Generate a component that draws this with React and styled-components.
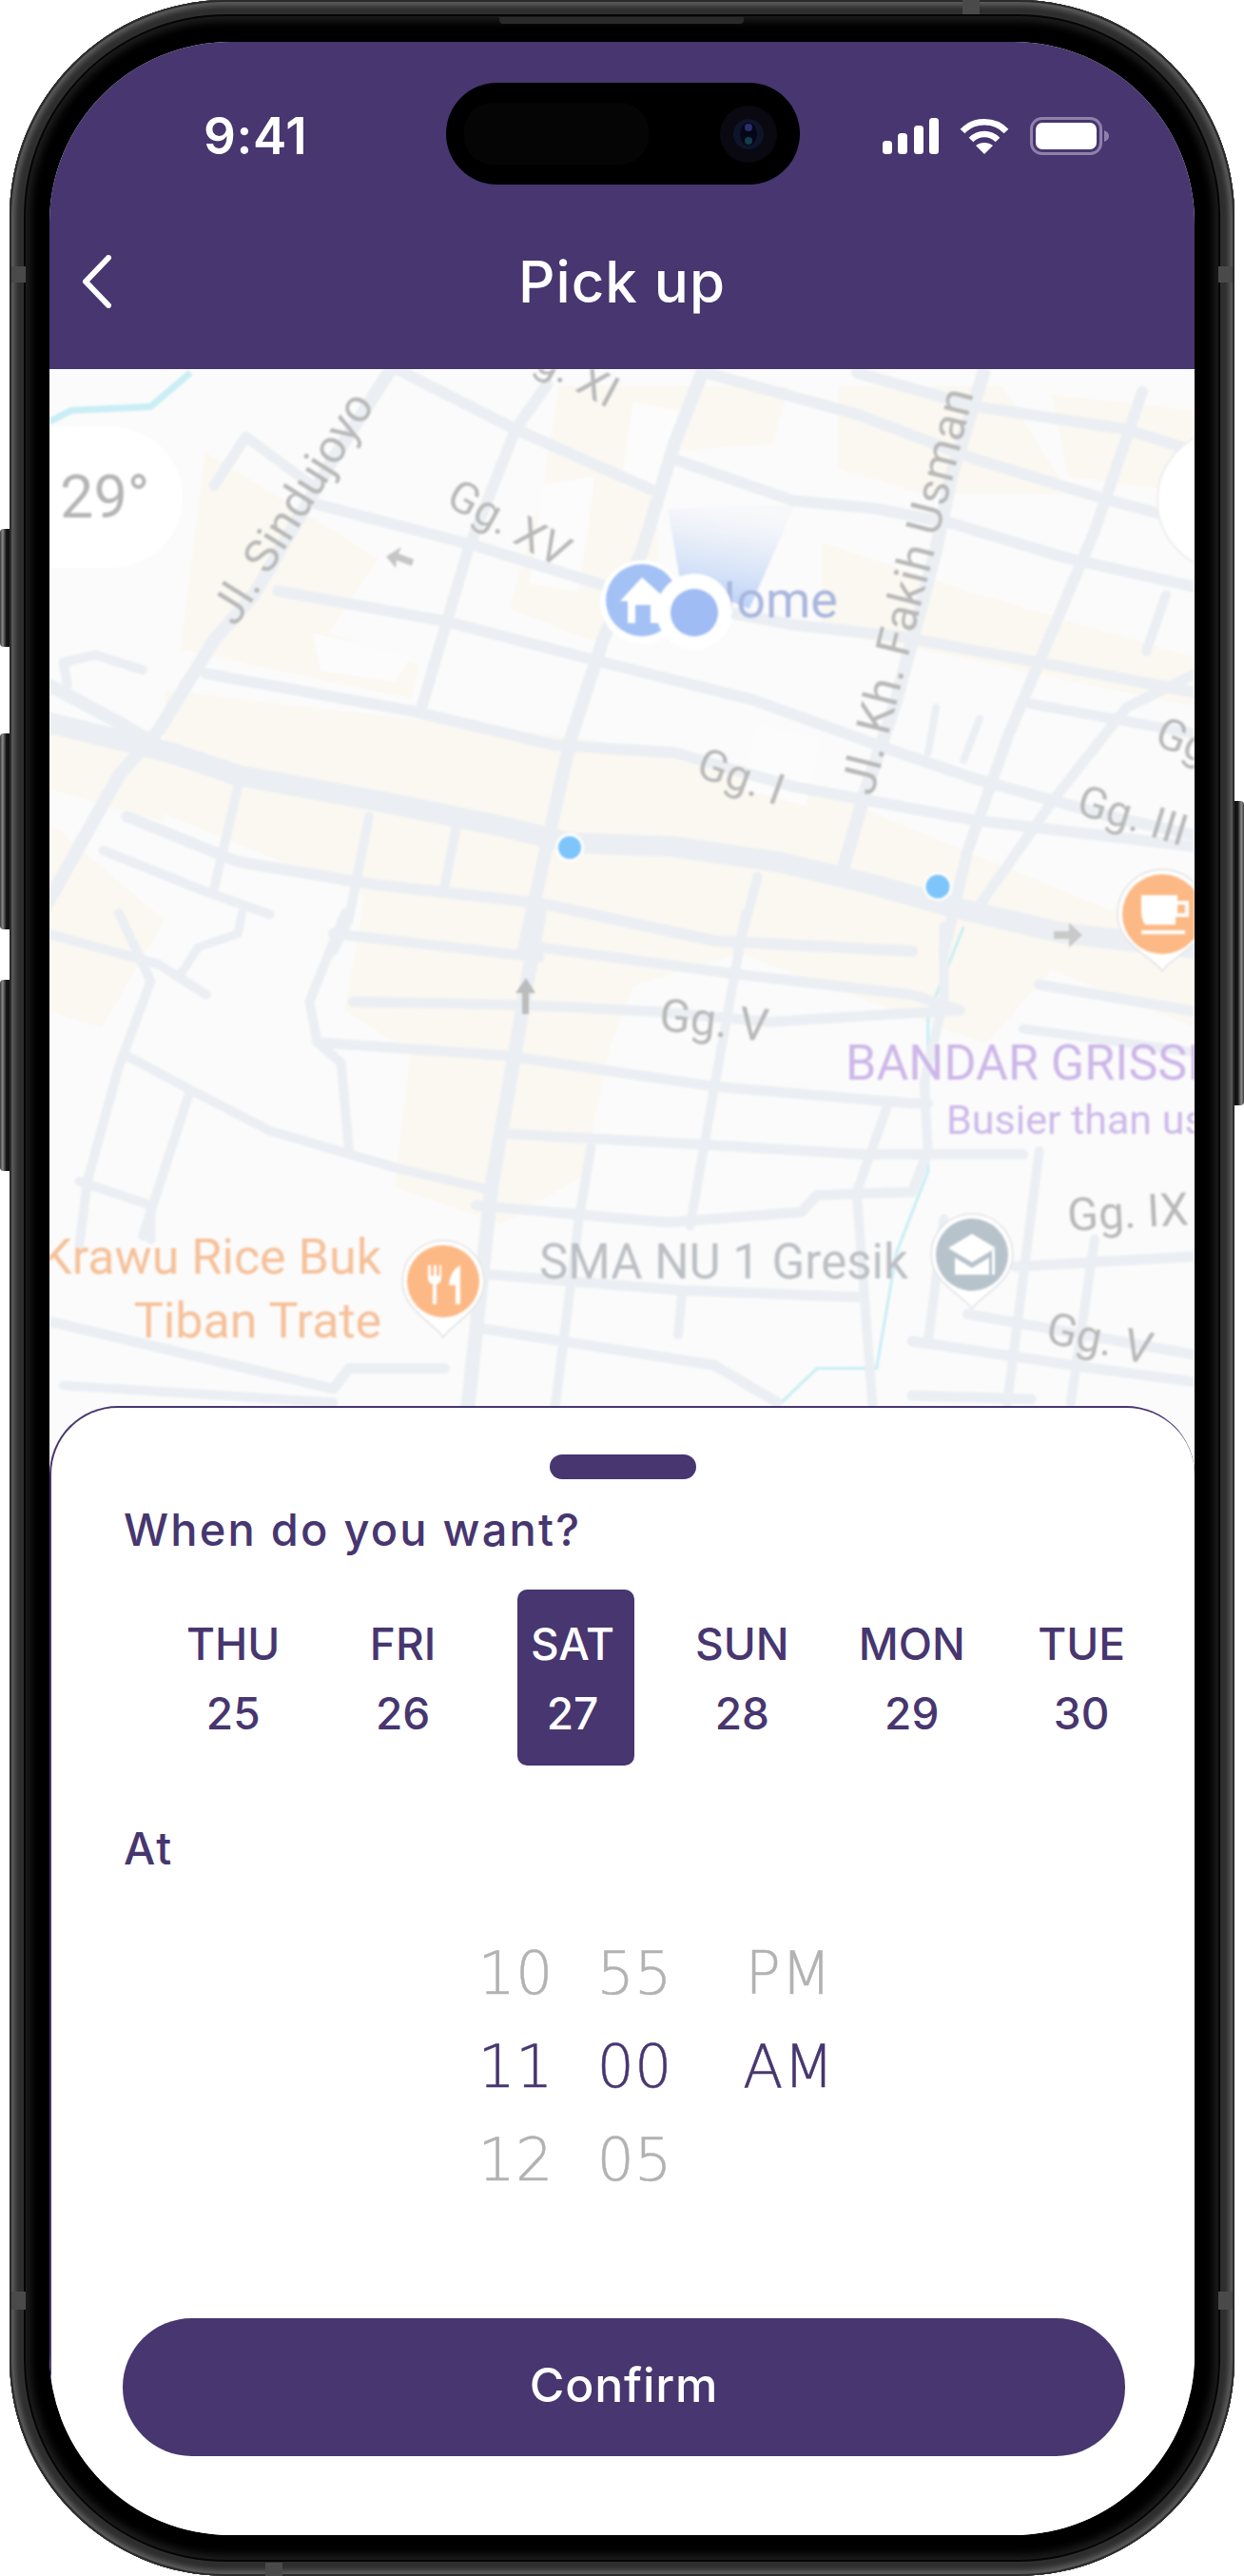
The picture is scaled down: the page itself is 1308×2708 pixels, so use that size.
import React from "react";
import styled, { createGlobalStyle } from "styled-components";

const PURPLE = "#47366f";
const UI = `"Inter", "Liberation Sans", sans-serif`;
const MAPFONT = `"Roboto", "Liberation Sans", sans-serif`;

const Global = createGlobalStyle`
  html, body { margin: 0; padding: 0; background: #fff; }
  * { box-sizing: border-box; }
`;

const Page = styled.div`
  width: 1308px;
  height: 2708px;
  padding: 0 10px;
  background: #fff;
  position: relative;
  overflow: hidden;
`;
const SideButton = styled.div`
  position: absolute;
  ${(p) => (p.$right ? "right: 0;" : "left: 0;")}
  top: ${(p) => p.$top}px;
  height: ${(p) => p.$h}px;
  width: 11px;
  border-radius: ${(p) => (p.$right ? "0 4px 4px 0" : "4px 0 0 4px")};
  background: linear-gradient(${(p) => (p.$right ? "270deg" : "90deg")}, #3a3a3a 0, #8a8a8a 25%, #161616 60%, #0c0c0c 100%);
`;
const Phone = styled.div`
  position: relative;
  width: 1288px;
  height: 2708px;
  padding: 44px 42px 43px;
  border-radius: 228px;
  background: #000;
  box-shadow:
    inset 0 0 0 2px #2b2b2b,
    inset 0 0 5px 6px #5c5c5c,
    inset 0 0 0 15px #2e2e2e,
    inset 0 0 0 17px #050505,
    inset 0 0 8px 22px #1e1e1e;
`;
const Antenna = styled.div`
  position: absolute;
  background: #4a4a4a;
  width: ${(p) => p.$w}px;
  height: ${(p) => p.$h}px;
  left: ${(p) => p.$l}px;
  top: ${(p) => p.$t}px;
`;
const Speaker = styled.div`
  position: absolute;
  left: 515px;
  top: 18px;
  width: 257px;
  height: 7px;
  background: #2a2a2a;
  border-radius: 0 0 4px 4px;
`;
const Screen = styled.div`
  position: relative;
  width: 1204px;
  height: 2621px;
  border-radius: 190px;
  overflow: hidden;
  background: #fff;
  display: flex;
  flex-direction: column;
`;
const Island = styled.div`
  position: absolute;
  left: 417px;
  top: 43px;
  width: 372px;
  height: 107px;
  border-radius: 54px;
  background: #000;
  display: flex;
  align-items: center;
  justify-content: space-between;
  padding: 0 24px 0 19px;
`;
const IslandSensor = styled.div`
  width: 194px;
  height: 65px;
  border-radius: 30px;
  background: #050505;
`;
const Header = styled.header`
  flex: none;
  height: 344px;
  background: ${PURPLE};
  padding-top: 79px;
  color: #fff;
  font-family: ${UI};
`;
const StatusRow = styled.div`
  display: flex;
  align-items: center;
  justify-content: space-between;
  height: 40px;
  padding: 0 90px 0 162px;
`;
const Clock = styled.div`
  font-size: 53px;
  line-height: 40px;
  font-weight: 600;
  letter-spacing: 0.6px;
`;
const StatusIcons = styled.div`
  display: flex;
  align-items: center;
  gap: 22px;
`;
const NavRow = styled.div`
  display: grid;
  grid-template-columns: 1fr auto 1fr;
  align-items: center;
  height: 60px;
  margin-top: 103px;
  padding-left: 34px;
`;
const Title = styled.div`
  font-size: 60px;
  line-height: 60px;
  font-weight: 500;
  margin-left: -34px;
  letter-spacing: 1px;
`;
const MapArea = styled.div`
  flex: none;
  height: 1162px;
  overflow: hidden;
  background: #fbfbfb;
`;
const MapSvg = styled.svg`
  display: block;
  width: 1204px;
  height: 1162px;
  filter: blur(1.1px);
`;
const Sheet = styled.section`
  flex: 1;
  position: relative;
  margin-top: -72px;
  background: #fff;
  border: solid ${PURPLE};
  border-width: 2px 0 0 2px;
  border-radius: 72px 72px 0 0;
  padding: 0 73px 0 75px;
  font-family: ${UI};
  color: ${PURPLE};
`;
const Handle = styled.div`
  width: 154px;
  height: 26px;
  margin: 49px 0 0 449px;
  border-radius: 13px;
  background: ${PURPLE};
`;
const Label = styled.h2`
  margin: ${(p) => p.$top}px 0 0 1px;
  font-size: 47px;
  line-height: 60px;
  font-weight: 500;
  letter-spacing: ${(p) => p.$ls || 0}px;
`;
const Days = styled.div`
  display: grid;
  grid-template-columns: repeat(6, 178.4px);
  margin: 33px 0 0 27px;
`;
const Day = styled.div`
  justify-self: center;
  width: 123px;
  height: 185px;
  margin-left: ${(p) => (p.$active ? 7 : 0)}px;
  padding: 21px ${(p) => (p.$active ? 7 : 0)}px 0 0;
  border-radius: 10px;
  background: ${(p) => (p.$active ? PURPLE : "transparent")};
  color: ${(p) => (p.$active ? "#fff" : PURPLE)};
  text-align: center;
  font-size: 46px;
  line-height: 73px;
  font-weight: 500;
  white-space: nowrap;
  display: flex;
  flex-direction: column;
  align-items: center;
`;
const Picker = styled.div`
  display: flex;
  margin: 53px 0 0 363px;
  font-family: "DejaVu Sans Light", "DejaVu Sans", sans-serif;
  font-weight: 200;
  font-size: 62px;
  line-height: 98px;
  -webkit-text-stroke: 0.5px currentColor;
`;
const Wheel = styled.div`
  width: ${(p) => p.$w}px;
  margin-right: ${(p) => p.$gap || 0}px;
  height: 294px;
  text-align: center;
`;
const WheelItem = styled.div`
  height: 98px;
  color: ${(p) => (p.$active ? PURPLE : "#b2b2b2")};
`;
const Confirm = styled.button`
  display: block;
  width: 1054px;
  height: 145px;
  margin-top: 117px;
  padding-bottom: 6px;
  border: 0;
  border-radius: 73px;
  background: ${PURPLE};
  color: #fff;
  font-family: ${UI};
  font-size: 50px;
  font-weight: 500;
  letter-spacing: 0.8px;
`;

const z2 = (s) => s.trim().split(/\s+/).map((p) => { const [x, y] = p.split(",").map(Number); return [x / 1.199, y / 2.529 + 380]; });
const z3 = (s) => s.trim().split(/\s+/).map((p) => { const [x, y] = p.split(",").map(Number); return [x / 1.199, y / 2.8 + 960]; });
const sh = (s) => s.trim().split(/\s+/).map((p) => { const [x, y] = p.split(",").map(Number); return [x * 1.728, y * 1.728]; });
const dPath = (pts) => pts.map((p, i) => `${i ? "L" : "M"}${p[0].toFixed(1)} ${p[1].toFixed(1)}`).join(" ");

const beige = [
  sh("100,420 360,450 520,490 727,575 727,625 640,590 600,635 450,580 385,600 370,640 355,715 305,745 240,722 250,640 210,615 222,545 100,495"),
  sh("30,500 100,560 62,625 30,615"),
  sh("30,440 100,460 100,500 30,480"),
  sh("125,275 230,340 200,385 255,405 250,425 110,395"),
  sh("340,235 480,235 470,270 400,275 400,350 360,390 310,370 330,300"),
  sh("510,235 610,235 650,300 560,300 510,285"),
  sh("640,240 727,250 727,300 650,290"),
  sh("500,330 590,360 727,400 727,430 560,395 500,385"),
];
const whiteBlocks = [
  sh("190,385 250,400 240,415 195,408"),
  sh("330,295 362,290 352,360 322,355"),
  sh("385,245 415,250 405,300 378,295"),
  sh("460,440 500,450 490,490 452,480"),
];

const roads = [
  [14, z2("885,30 850,220 810,500 760,740 720,1000 690,1280 660,1568")],
  [22, z2("62,960 215,1040 300,1100 480,1170 620,1230 720,1280 850,1290 980,1330 1100,1390 1200,1450 1340,1520 1507,1560")],
  [14, z2("490,30 420,260 320,620 270,740 200,980 150,1100 60,1440")],
  [14, z2("62,860 150,960 215,1040")],
  [14, z2("1240,30 1200,300 1180,500 1130,900 1090,1150 1060,1370")],
  [12, z2("1440,80 1380,450 1320,750 1270,1000 1220,1300 1190,1568")],
  [12, z2("690,60 650,180 590,500 530,930")],
  [12, z2("500,20 650,180 820,340")],
  [12, z2("350,610 560,690 760,800 950,900 1120,1030 1230,1110 1400,1210 1507,1260")],
  [12, z2("400,380 600,490 800,620 1000,700 1130,730 1310,800 1507,880")],
  [12, z2("260,830 520,930 700,1020 850,1040 1000,1130 1230,1220 1507,1290")],
  [12, z2("850,260 1000,370 1100,390 1200,430 1340,520 1507,600")],
  [12, z2("890,30 1080,140 1230,260 1400,370 1507,430")],
  [12, z2("1080,30 1230,120 1420,180 1507,240")],
  [11, z2("270,330 310,200 400,340")],
  [11, z2("1300,910 1507,990")],
  [11, z2("1507,830 1420,920 1330,1160 1230,1460")],
  [8, z2("1180,920 1170,1040")],
  [8, z2("1235,950 1215,1060")],
  [10, z2("1470,620 1445,770")],
  [10, z2("80,800 120,780 180,820")],
  [10, z2("80,800 85,860")],
  [10, z2("300,1130 270,1400")],
  [10, z2("465,1210 440,1480 420,1568")],
  [10, z2("575,1240 560,1400")],
  [10, z2("955,1370 930,1568")],
  [12, z2("160,1210 300,1330 470,1390 680,1440 900,1540 1150,1568")],
  [10, z2("130,1300 260,1410 340,1470")],
  [10, z3("60,60 200,150 260,240")],
  [10, z3("150,0 190,200 150,450 110,790 100,980")],
  [9, z3("225,190 250,100 300,60 305,0")],
  [10, z3("435,0 390,260 400,380 430,440 440,700")],
  [11, z3("445,260 660,270 830,290 970,320 1210,285")],
  [11, z3("400,380 640,420 900,510 1150,560 1170,560")],
  [10, z3("160,420 240,520 340,640 500,750 610,810")],
  [10, z3("240,520 180,950")],
  [11, z3("640,650 880,680 1090,710 1290,710")],
  [11, z3("600,860 840,910 1010,880 1030,830 1150,820 1170,700")],
  [10, z3("1170,700 1165,500 1190,250 1190,40")],
  [15, z3("680,0 650,400 620,800 590,1450")],
  [10, z3("100,790 190,860 190,960")],
  [11, z3("600,1060 860,1110 1080,1130")],
  [10, z3("860,1110 855,1240")],
  [11, z3("60,1200 420,1400 440,1340 560,1340")],
  [11, z3("600,1220 900,1330 980,1440")],
  [10, z3("745,690 730,900 700,1450")],
  [10, z3("940,0 900,520 870,920")],
  [10, z3("1310,700 1270,1440")],
  [10, z3("1380,960 1350,1440")],
  [10, z3("1120,560 1080,820 1100,1450")],
  [11, z3("1280,1040 1507,1010")],
  [11, z3("1220,1180 1507,1300")],
  [11, z3("1150,1260 1380,1340 1507,1380")],
  [10, z3("1190,900 1170,1260")],
  [11, z3("1150,1420 1300,1430")],
  [10, z3("80,1390 420,1440")],
  [11, z3("1310,210 1507,290")],
  [11, z3("680,100 930,180 1150,240 1210,285")],
  [11, z3("420,60 680,130")],
  [10, z3("1290,340 1507,410")],
];

const water = [
  [7, z2("62,160 90,130 190,120 240,30")],
  [3, z3("1215,40 1170,300 1170,760 1130,1000 1105,1340 1030,1340 985,1440")],
];

const Pin = ({ x, y, r, tip, fill, children }) => (
  <g>
    <path d={`M${x - r} ${y} A${r} ${r} 0 1 1 ${x + r} ${y} C${x + r} ${y + r * 0.7} ${x + 8} ${y + tip - 14} ${x} ${y + tip} C${x - 8} ${y + tip - 14} ${x - r} ${y + r * 0.7} ${x - r} ${y} Z`} fill="#fff" stroke="#e2e2e2" strokeWidth="1.5" />
    <circle cx={x} cy={y} r={r - 5} fill={fill} />
    {children}
  </g>
);

const Gray = "#b9b9b9";
const MapLabel = ({ x, y, r = 0, size = 40, fill = Gray, anchor = "start", children }) => (
  <text x={x} y={y} transform={r ? `rotate(${r} ${x} ${y})` : undefined} fontFamily={MAPFONT} fontSize={size} fill={fill} textAnchor={anchor}>
    {children}
  </text>
);

const poly = (pts) => pts.map((p) => p.join(",")).join(" ");

const MapPicture = () => (
  <MapSvg viewBox="52 388 1204 1162" aria-label="map">
    <defs>
      <linearGradient id="beam" x1="0" y1="1" x2="0.2" y2="0">
        <stop offset="0" stopColor="#a8c4f6" stopOpacity="0.9" />
        <stop offset="0.6" stopColor="#c3d6f6" stopOpacity="0.45" />
        <stop offset="1" stopColor="#dfe6f2" stopOpacity="0.15" />
      </linearGradient>
    </defs>
    <rect x="52" y="388" width="1204" height="1162" fill="#fbfbfb" />
    {beige.map((b, i) => (
      <polygon key={i} points={poly(b)} fill="#fbf8f1" />
    ))}
    {whiteBlocks.map((b, i) => (
      <polygon key={i} points={poly(b)} fill="#fcfcfc" />
    ))}
    {water.map(([w, pts], i) => (
      <path key={i} d={dPath(pts)} fill="none" stroke="#c9eef5" strokeWidth={w} strokeLinejoin="round" />
    ))}
    {roads.map(([w, pts], i) => (
      <path key={i} d={dPath(pts)} fill="none" stroke="#ebeff3" strokeWidth={w} strokeLinejoin="round" strokeLinecap="round" />
    ))}

    <path d="M52 449 H118 A74 74 0 0 1 118 597 H52 Z" fill="#fff" />
    <circle cx="1292" cy="526" r="75" fill="#fff" stroke="#eeeeee" strokeWidth="2" />
    <MapLabel x={63} y={544} size={63} fill="#b5b5b5">29°</MapLabel>

    <MapLabel x={248} y={660} r={-58} size={49}>Jl. Sindujoyo</MapLabel>
    <MapLabel x={532} y={372} r={28} size={46}>Gg. XI</MapLabel>
    <MapLabel x={467} y={530} r={29} size={46}>Gg. XV</MapLabel>
    <MapLabel x={730} y={815} r={20} size={46}>Gg. I</MapLabel>
    <MapLabel x={918} y={838} r={-76} size={50}>Jl. Kh. Fakih Usman</MapLabel>
    <MapLabel x={1212} y={782} r={22} size={46}>Gg</MapLabel>
    <MapLabel x={1130} y={855} r={17} size={46}>Gg. III</MapLabel>
    <MapLabel x={692} y={1083} r={6} size={48}>Gg. V</MapLabel>
    <MapLabel x={1123} y={1294} r={-3} size={48}>Gg. IX</MapLabel>
    <MapLabel x={1098} y={1411} r={12} size={47}>Gg. V</MapLabel>
    <MapLabel x={889} y={1135} size={52} fill="#cdb7e9">BANDAR GRISSIK</MapLabel>
    <MapLabel x={995} y={1192} size={43} fill="#cdb9ea">Busier than usual</MapLabel>
    <MapLabel x={401} y={1339} size={52} fill="#f6c19a" anchor="end">Krawu Rice Buk</MapLabel>
    <MapLabel x={401} y={1406} size={52} fill="#f6c19a" anchor="end">Tiban Trate</MapLabel>
    <MapLabel x={567} y={1344} size={51} fill="#bcc0c4">SMA NU 1 Gresik</MapLabel>

    <polygon points="702,535 836,530 788,640 715,610" fill="url(#beam)" />
    <MapLabel x={881} y={649} size={54} fill="#a9b7de" anchor="end">Home</MapLabel>

    <path d="M406 585 l16 -10 -3 7 16 6 -2 7 -16 -6 -1 8 Z" fill="#c6c6c6" />
    <path d="M1138 983 l-14 -13 v9 h-16 v8 h16 v9 Z" fill="#c9c9c9" />
    <path d="M553 1028 l-11 16 h7 v22 h7 v-22 h7 Z" fill="#bcbcbc" />

    <circle cx="675" cy="633" r="44" fill="#fff" />
    <circle cx="675" cy="631" r="38" fill="#a4c1f6" />
    <path d="M675 607 L703 632 L697 632 V655 H684 V636 H668 V655 H660 V632 H652 Z" fill="#fff" />
    <circle cx="730" cy="643" r="40" fill="#fff" />
    <circle cx="730" cy="644" r="25" fill="#9fbcf5" />

    <circle cx="599" cy="891" r="15" fill="#fff" />
    <circle cx="599" cy="891" r="12" fill="#7ec5fb" />
    <circle cx="986" cy="932" r="15" fill="#fff" />
    <circle cx="986" cy="932" r="12.5" fill="#7ec5fb" />

    <Pin x={1222} y={961} r={47} tip={60} fill="#fdb985">
      <path d="M1200 941 H1238 V947 H1250 V964 H1236 V972 H1204 Q1200 966 1200 958 Z M1238 951 V960 H1246 V951 Z" fill="#fff" fillRule="evenodd" />
      <rect x="1200" y="978" width="46" height="4" fill="#fff" />
    </Pin>
    <Pin x={466} y={1347} r={43} tip={59} fill="#fdb985">
      <path d="M450 1330 v13 q0 6 5 7 v21 h4 v-21 q5 -1 5 -7 v-13 h-2 v11 h-3 v-11 h-3 v11 h-3 v-11 Z" fill="#fff" />
      <path d="M484 1330 q-11 6 -12 21 h7 v20 h5 Z" fill="#fff" />
    </Pin>
    <Pin x={1022} y={1319} r={43} tip={57} fill="#b7c3cb">
      <path d="M1022 1297 L1047 1312 L1022 1327 L997 1312 Z" fill="#fff" />
      <path d="M1004 1322 V1340 H1040 V1322 L1022 1333 Z" fill="#fff" />
      <rect x="1043" y="1314" width="3" height="26" fill="#fff" />
    </Pin>
  </MapSvg>
);

const Signal = () => (
  <svg width="59" height="38" viewBox="0 0 59 38" fill="#fff">
    <rect x="0" y="24" width="10" height="14" rx="3.5" />
    <rect x="16" y="16" width="10" height="22" rx="3.5" />
    <rect x="33" y="8" width="10" height="30" rx="3.5" />
    <rect x="49" y="0" width="10" height="38" rx="3.5" />
  </svg>
);
const Wifi = () => (
  <svg width="52" height="38" viewBox="0 0 52 38" fill="none" stroke="#fff" strokeWidth="6.5">
    <path d="M3 14 C15 1 37 1 49 14" />
    <path d="M12 23 C20 15 32 15 40 23" />
    <path d="M26 38 L17 29 C22 25 30 25 35 29 Z" fill="#fff" stroke="none" />
  </svg>
);
const Battery = () => (
  <svg width="83" height="40" viewBox="0 0 83 40">
    <rect x="1.5" y="1.5" width="73" height="37" rx="11" fill="none" stroke="#8e82ab" strokeWidth="3" />
    <rect x="6" y="6" width="64" height="28" rx="7" fill="#fff" />
    <path d="M78 14 q5 2 5 6 t-5 6 Z" fill="#8e82ab" />
  </svg>
);
const Back = () => (
  <svg width="32" height="56" viewBox="0 0 32 56" fill="none" stroke="#fff" strokeWidth="6" strokeLinecap="round" strokeLinejoin="round">
    <path d="M28 3 L4 28 L28 53" />
  </svg>
);
const Camera = () => (
  <svg width="60" height="60" viewBox="0 0 60 60">
    <ellipse cx="30" cy="30" rx="30" ry="30" fill="#0a0810" />
    <ellipse cx="30" cy="30" rx="16" ry="16" fill="#10142a" />
    <ellipse cx="30" cy="30" rx="9" ry="12" fill="#05061a" />
    <circle cx="30" cy="23" r="4" fill="#2a2f6a" />
    <circle cx="30" cy="37" r="4" fill="#123d4a" />
  </svg>
);

const days = [["THU", 25], ["FRI", 26], ["SAT", 27], ["SUN", 28], ["MON", 29], ["TUE", 30]];

export default function App() {
  return (
    <Page>
      <Global />
      <SideButton $top={556} $h={124} />
      <SideButton $top={771} $h={206} />
      <SideButton $top={1030} $h={201} />
      <SideButton $right $top={842} $h={320} />
      <Phone>
        <Speaker />
        <Antenna $l={1002} $t={0} $w={18} $h={15} />
        <Antenna $l={269} $t={2694} $w={18} $h={14} />
        <Antenna $l={2} $t={280} $w={15} $h={17} />
        <Antenna $l={1271} $t={280} $w={15} $h={17} />
        <Antenna $l={2} $t={2409} $w={15} $h={19} />
        <Antenna $l={1271} $t={2409} $w={15} $h={19} />
        <Screen>
          <Header>
            <StatusRow>
              <Clock>9:41</Clock>
              <StatusIcons>
                <Signal />
                <Wifi />
                <Battery />
              </StatusIcons>
            </StatusRow>
            <NavRow>
              <Back />
              <Title>Pick up</Title>
            </NavRow>
          </Header>
          <MapArea>
            <MapPicture />
          </MapArea>
          <Sheet>
            <Handle />
            <Label $top={23} $ls={2.2}>When do you want?</Label>
            <Days>
              {days.map(([d, n]) => (
                <Day key={d} $active={d === "SAT"}>
                  <span>{d}</span>
                  <span>{n}</span>
                </Day>
              ))}
            </Days>
            <Label $top={57} $ls={2}>At</Label>
            <Picker>
              <Wheel $w={100} $gap={25}>
                <WheelItem>10</WheelItem>
                <WheelItem $active>11</WheelItem>
                <WheelItem>12</WheelItem>
              </Wheel>
              <Wheel $w={100} $gap={52}>
                <WheelItem>55</WheelItem>
                <WheelItem $active>00</WheelItem>
                <WheelItem>05</WheelItem>
              </Wheel>
              <Wheel $w={120}>
                <WheelItem>PM</WheelItem>
                <WheelItem $active>AM</WheelItem>
              </Wheel>
            </Picker>
            <Confirm>Confirm</Confirm>
          </Sheet>
          <Island>
            <IslandSensor />
            <Camera />
          </Island>
        </Screen>
      </Phone>
    </Page>
  );
}
